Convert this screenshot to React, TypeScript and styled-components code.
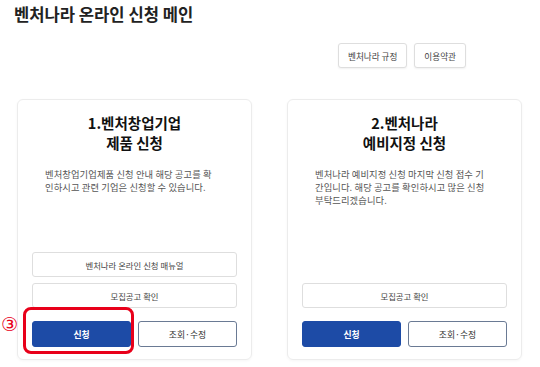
import React from "react";
import styled, { createGlobalStyle } from "styled-components";

const Global = createGlobalStyle`
  html, body { margin: 0; padding: 0; background: #fff; }
  body { font-family: "Noto Sans CJK KR", "Noto Sans", sans-serif; color: #222; }
  * { box-sizing: border-box; }
`;

const Page = styled.div`
  width: 540px;
  height: 367px;
  padding: 4px 0 0 14px;
  overflow: hidden;
`;

const PageTitle = styled.h1`
  margin: 0;
  font-size: 16.6px;
  line-height: 21px;
  font-weight: 700;
  color: #222;
`;

const TopBar = styled.div`
  display: flex;
  justify-content: flex-end;
  gap: 7px;
  padding-right: 74px;
  margin-top: 18px;
`;

const SmallButton = styled.button`
  height: 25px;
  padding: 0 9px;
  background: #fff;
  border: 1px solid #dedede;
  border-radius: 3px;
  box-shadow: 0 1px 2px rgba(0, 0, 0, 0.06);
  font-family: inherit;
  font-size: 8.6px;
  color: #444;
  cursor: pointer;
`;

const Cards = styled.div`
  display: flex;
  gap: 35px;
  margin-top: 31px;
  padding-left: 3px;
`;

const Card = styled.div`
  position: relative;
  width: 235px;
  height: 261px;
  border: 1px solid #ececec;
  border-radius: 6px;
  box-shadow: 0 1px 3px rgba(0, 0, 0, 0.04);
  padding: 13px 14px 12px;
  display: flex;
  flex-direction: column;
`;

const CardTitle = styled.h2`
  margin: 0;
  text-align: center;
  font-size: 14.5px;
  line-height: 20px;
  font-weight: 700;
  color: #111;
`;

const Desc = styled.p`
  margin: 15px 0 0;
  padding: 0 0 0 13px;
  font-size: 9.3px;
  line-height: 13px;
  letter-spacing: 0.1px;
  color: #555;
  white-space: nowrap;
`;

const Actions = styled.div`
  margin-top: auto;
  display: flex;
  flex-direction: column;
  gap: 6px;
`;

const WideButton = styled.button`
  height: 25px;
  width: 100%;
  background: #fff;
  border: 1px solid #dedede;
  border-radius: 3px;
  font-family: inherit;
  font-size: 8.4px;
  color: #444;
  cursor: pointer;
`;

const Row = styled.div`
  display: flex;
  gap: 7px;
  margin-top: 13px;
`;

const ActionButton = styled.button<{ $primary?: boolean }>`
  flex: 1;
  height: 26px;
  border-radius: 3px;
  font-family: inherit;
  font-size: 8.8px;
  cursor: pointer;
  background: ${(p) => (p.$primary ? "#1d4ba6" : "#fff")};
  color: ${(p) => (p.$primary ? "#fff" : "#333")};
  font-weight: ${(p) => (p.$primary ? 700 : 400)};
  border: 1px solid ${(p) => (p.$primary ? "#1d4ba6" : "#6a7a94")};
`;

const Highlight = styled.div`
  position: absolute;
  left: 5px;
  top: 207px;
  width: 111px;
  height: 47px;
  border: 3px solid #e8001a;
  border-radius: 8px;
  pointer-events: none;
`;

const StepMark = styled.span`
  position: absolute;
  left: -17px;
  top: 213px;
  font-size: 19px;
  line-height: 22px;
  color: #e8001a;
  font-family: "DejaVu Sans", sans-serif;
`;

export default function App() {
  return (
    <>
      <Global />
      <Page>
        <PageTitle>벤처나라 온라인 신청 메인</PageTitle>
        <TopBar>
          <SmallButton>벤처나라 규정</SmallButton>
          <SmallButton>이용약관</SmallButton>
        </TopBar>
        <Cards>
          <Card>
            <CardTitle>
              1.벤처창업기업
              <br />
              제품 신청
            </CardTitle>
            <Desc>
              벤처창업기업제품 신청 안내 해당 공고를 확
              <br />
              인하시고 관련 기업은 신청할 수 있습니다.
            </Desc>
            <Actions>
              <WideButton>벤처나라 온라인 신청 매뉴얼</WideButton>
              <WideButton>모집공고 확인</WideButton>
            </Actions>
            <Row>
              <ActionButton $primary>신청</ActionButton>
              <ActionButton>조회·수정</ActionButton>
            </Row>
            <Highlight />
            <StepMark>③</StepMark>
          </Card>
          <Card>
            <CardTitle>
              2.벤처나라
              <br />
              예비지정 신청
            </CardTitle>
            <Desc>
              벤처나라 예비지정 신청 마지막 신청 접수 기
              <br />
              간입니다. 해당 공고를 확인하시고 많은 신청
              <br />
              부탁드리겠습니다.
            </Desc>
            <Actions>
              <WideButton>모집공고 확인</WideButton>
            </Actions>
            <Row>
              <ActionButton $primary>신청</ActionButton>
              <ActionButton>조회·수정</ActionButton>
            </Row>
          </Card>
        </Cards>
      </Page>
    </>
  );
}
